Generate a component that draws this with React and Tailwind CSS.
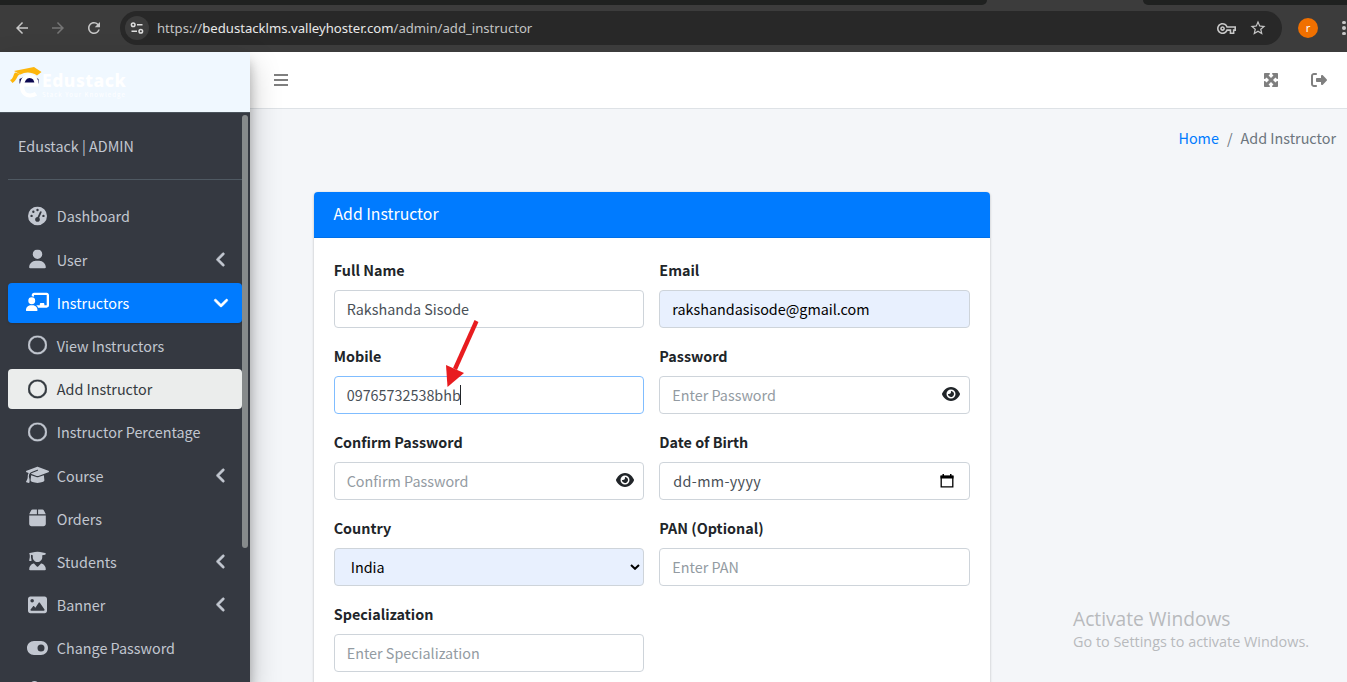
import { FaAngleDown, FaAngleLeft, FaBox, FaChalkboardUser, FaEye, FaGaugeHigh, FaGraduationCap, FaImage, FaMaximize, FaRegCircle, FaRightFromBracket, FaToggleOn, FaUser, FaUserGraduate } from 'react-icons/fa6';
import { MdArrowBack, MdArrowForward, MdOutlineVpnKey, MdRefresh, MdStarOutline } from 'react-icons/md';

const menu = [
  { label: 'Dashboard', icon: FaGaugeHigh, size: 19 },
  { label: 'User', icon: FaUser, size: 19, arrow: true },
  { label: 'Instructors', icon: FaChalkboardUser, size: 23, open: true },
  { label: 'View Instructors', icon: FaRegCircle, size: 19 },
  { label: 'Add Instructor', icon: FaRegCircle, size: 19, current: true },
  { label: 'Instructor Percentage', icon: FaRegCircle, size: 19 },
  { label: 'Course', icon: FaGraduationCap, size: 23, arrow: true },
  { label: 'Orders', icon: FaBox, size: 19 },
  { label: 'Students', icon: FaUserGraduate, size: 19, arrow: true },
  { label: 'Banner', icon: FaImage, size: 19, arrow: true },
  { label: 'Change Password', icon: FaToggleOn, size: 21 },
];

const BrowserBar = () => (
  <div className="h-[52px] shrink-0 bg-[#3c3c3c] font-['Noto_Sans',sans-serif]">
    <div className="flex h-[5px] justify-between bg-[#3c3c3c]">
      <div className="w-[987px] rounded-br-md bg-[#1f2120]" />
      <div className="w-[204px] rounded-bl-md bg-[#1f2120]" />
    </div>
    <div className="flex h-[46px] items-center">
      <div className="flex w-[120px] items-center gap-[18px] pl-[13px] text-[#c7c7c7]">
        <MdArrowBack size={18} />
        <MdArrowForward size={18} className="text-[#757575]" />
        <MdRefresh size={18} />
      </div>
      <div className="flex h-[34px] w-[1162px] items-center rounded-full bg-[#282828] pl-[5px] pr-[19px]">
        <div className="flex size-6 items-center justify-center rounded-full bg-[#3c3c3c]">
          <svg width="14" height="14" viewBox="0 0 14 14" fill="none" stroke="#dedede" strokeWidth="1.5">
            <circle cx="3.2" cy="3.8" r="1.8" />
            <path d="M7 3.8h5.5M1.5 10.2H7" />
            <circle cx="10.8" cy="10.2" r="1.8" />
          </svg>
        </div>
        <p className="ml-2 flex-1 text-[13.13px] text-[#e8e8e8]">
          <span className="text-[#c4c4c4]">https://</span>
          bedustacklms.valleyhoster.com
          <span className="text-[#c4c4c4]">/admin/add_instructor</span>
        </p>
        <MdOutlineVpnKey size={19} className="text-[#c7c7c7]" />
        <MdStarOutline size={18} className="ml-[13px] -mr-1 text-[#c7c7c7]" />
      </div>
      <div className="ml-4 flex size-5 items-center justify-center rounded-full bg-[#f07000] text-[11px] text-white">r</div>
      <div className="ml-6 flex flex-col gap-[2px]">
        <i className="size-[3.5px] rounded-full bg-[#c7c7c7]" />
        <i className="size-[3.5px] rounded-full bg-[#c7c7c7]" />
        <i className="size-[3.5px] rounded-full bg-[#c7c7c7]" />
      </div>
    </div>
  </div>
);

const Logo = () => (
  <div className="flex h-[61px] shrink-0 items-start border-b border-[#4b545c] bg-[#f0f8ff] pl-[9px] pt-[14px]">
    <svg width="33" height="32" viewBox="0 0 33 32">
      <path d="M10.500 17.500V13Q20 7 29.500 13V17.500Z" fill="#0b0850" />
      <path d="M13 18.500H27.500C27.500 13 24.500 10 20.500 10S13 13.500 13 20s3.500 9.500 8 9.500c2.500 0 4.500-.7 6-1.700" fill="none" stroke="#fff" strokeWidth="4.200" />
      <path d="M5 5 25 1 32.500 6 28 9.500C22 5.500 16 6 11.500 8.500Z" fill="#fdb60d" />
      <path d="M6 6.500 11.500 8C7 10 8.500 14 3.500 17L1 14C4.500 13 4 9 6 6.500Z" fill="#fdb60d" />
    </svg>
    <div className="mt-[4px] text-white">
      <p className="font-['Noto_Sans',sans-serif] text-[17.5px] font-extrabold leading-[20px] tracking-[0.5px]">Edustack</p>
      <p className="text-[6px] leading-[9px] tracking-[1.1px]">Stack Your Knowledge</p>
    </div>
  </div>
);

const MenuItem = ({ item }) => {
  const Icon = item.icon;
  let color = 'text-[#c2c7d0]';
  if (item.open) color = 'bg-[#007bff] text-white shadow';
  if (item.current) color = 'bg-[#ebedec] text-[#343a40]';

  return (
    <a className={`mb-[3.2px] flex h-10 shrink-0 items-center rounded pl-[15.7px] pr-[12.5px] ${color}`}>
      <span className="flex w-7 shrink-0 -translate-y-[0.6px] justify-center">
        <Icon size={item.size} stroke="currentColor" strokeWidth={item.icon === FaRegCircle ? 12 : 0} />
      </span>
      <span className="ml-[5.1px] flex-1 whitespace-nowrap">{item.label}</span>
      {item.arrow && <FaAngleLeft size={18} strokeWidth={16} className="-translate-y-[0.5px]" />}
      {item.open && <FaAngleDown size={18} strokeWidth={16} className="-translate-y-[0.5px]" />}
    </a>
  );
};

const Sidebar = () => (
  <aside className="relative z-10 flex w-[250px] shrink-0 flex-col overflow-hidden bg-[#353941] shadow-[0_14px_28px_rgba(0,0,0,0.25),0_10px_10px_rgba(0,0,0,0.22)]">
    <Logo />
    <div className="flex min-h-0 flex-1 overflow-hidden">
      <div className="ml-2 flex w-[234px] flex-col">
        <p className="flex h-[67px] shrink-0 items-center border-b border-[#4f5962] pl-[10px] text-[#c2c7d0]">Edustack | ADMIN</p>
        <nav className="mt-[16.4px] flex flex-col">
          {menu.map((item) => <MenuItem key={item.label} item={item} />)}
          <FaUser size={19} className="ml-[17px] mt-[10px] shrink-0 text-[#c2c7d0]" />
        </nav>
      </div>
      <div className="mt-[2px] h-[433px] w-[6px] rounded-full bg-[#868a8b]" />
    </div>
  </aside>
);

const Field = ({ label, text, className = 'border-[#ced4da] bg-white pl-3 text-[#939ba2]', children }) => (
  <div className="mb-4 flex flex-col">
    <label className="mb-2 h-6 font-bold leading-6 text-[#212529]">{label}</label>
    <div className={`flex h-[38px] items-center rounded border pr-[9px] ${className}`}>
      <span>{text}</span>
      {children}
    </div>
  </div>
);

const InstructorForm = () => (
  <div className="ml-16 mt-[83px] w-[676px] rounded bg-white shadow-[0_0_1px_rgba(0,0,0,0.125),0_1px_3px_rgba(0,0,0,0.2)]">
    <h3 className="flex h-[46px] items-center rounded-t border-b border-[#0070e8] bg-[#007bff] pb-[2px] pl-[19.5px] text-[15.8px] text-white">Add Instructor</h3>
    <div className="grid grid-cols-2 gap-x-[15px] pl-[19.7px] pr-[20.1px] pt-5">
      <Field label="Full Name" text="Rakshanda Sisode" className="border-[#ced4da] bg-white pl-3 text-[#495057]" />
      <Field label="Email" text="rakshandasisode@gmail.com" className="border-[#ced4da] bg-[#e8f0fe] pl-3 text-black" />
      <Field label="Mobile" text="09765732538bhb" className="border-[#80bdff] bg-white pl-3 text-[#495057]">
        <i className="-ml-px h-5 w-px bg-[#212529]" />
      </Field>
      <Field label="Password" text="Enter Password">
        <FaEye size={18} className="ml-auto -translate-y-px text-[#212529]" />
      </Field>
      <Field label="Confirm Password" text="Confirm Password">
        <FaEye size={18} className="ml-auto -translate-y-px text-[#212529]" />
      </Field>
      <Field label="Date of Birth" text="dd-mm-yyyy" className="border-[#ced4da] bg-white pl-[13px] tracking-[0.35px] text-[#495057]">
        <svg width="14" height="14" viewBox="0 0 14 14" className="ml-auto mr-[6px]">
          <path d="M1.200 2.500h11.600v10.300H1.200Z" fill="none" stroke="#000" strokeWidth="1.300" />
          <path d="M.5 1.500h13V4.500H.5ZM2.500 0H4v2H2.500ZM10 0h1.500v2H10Z" />
        </svg>
      </Field>
      <Field label="Country" text="India" className="border-[#ced4da] bg-[#e8f0fe] pl-4 text-black">
        <svg width="10" height="6" viewBox="0 0 10 6" className="-mr-[6px] ml-auto">
          <path d="M1 1 5 4.800 9 1" fill="none" stroke="#000" strokeWidth="2" />
        </svg>
      </Field>
      <Field label="PAN (Optional)" text="Enter PAN" />
      <Field label="Specialization" text="Enter Specialization" />
    </div>
  </div>
);

const App = () => (
  <div className="relative flex h-[682px] w-[1347px] flex-col overflow-hidden bg-[#f4f6f9] font-['Noto_Sans_CJK_SC',sans-serif] text-[14.37px] leading-6">
    <BrowserBar />
    <div className="flex min-h-0 flex-1">
      <Sidebar />
      <main className="flex min-w-0 flex-1 flex-col overflow-hidden">
        <header className="flex h-[57px] shrink-0 items-center border-b border-[#dee2e6] bg-white pl-6 pr-[19px] text-[#7f7f7f]">
          <div className="flex flex-1 flex-col gap-[3px]">
            <i className="h-[2px] w-[14px] bg-[#7f7f7f]" />
            <i className="h-[2px] w-[14px] bg-[#7f7f7f]" />
            <i className="h-[2px] w-[14px] bg-[#7f7f7f]" />
          </div>
          <FaMaximize size={16} />
          <FaRightFromBracket size={16} className="ml-8 mr-[1px]" />
        </header>
        <div className="relative flex-1">
          <div className="absolute right-[11px] top-[17px] flex text-[#6c757d]">
            <a className="text-[#007bff]">Home</a>
            <span className="px-2">/</span>
            <span>Add Instructor</span>
          </div>
          <InstructorForm />
        </div>
      </main>
    </div>

    {/* callout pointing at the mobile number */}
    <svg width="40" height="70" viewBox="0 0 40 70" className="absolute left-[442px] top-[319px] z-20">
      <path d="M34.500 2 13 50" stroke="#e81c1f" strokeWidth="4.300" />
      <path d="M4 46 22 54 5.500 68Z" fill="#e81c1f" />
    </svg>

    <div className="absolute left-[1073px] top-[607px] whitespace-nowrap font-['Open_Sans',sans-serif] text-[#b8babd]">
      <p className="text-[19.2px] leading-6">Activate Windows</p>
      <p className="text-[14.42px] leading-[22px]">Go to Settings to activate Windows.</p>
    </div>
  </div>
);

export default App;
